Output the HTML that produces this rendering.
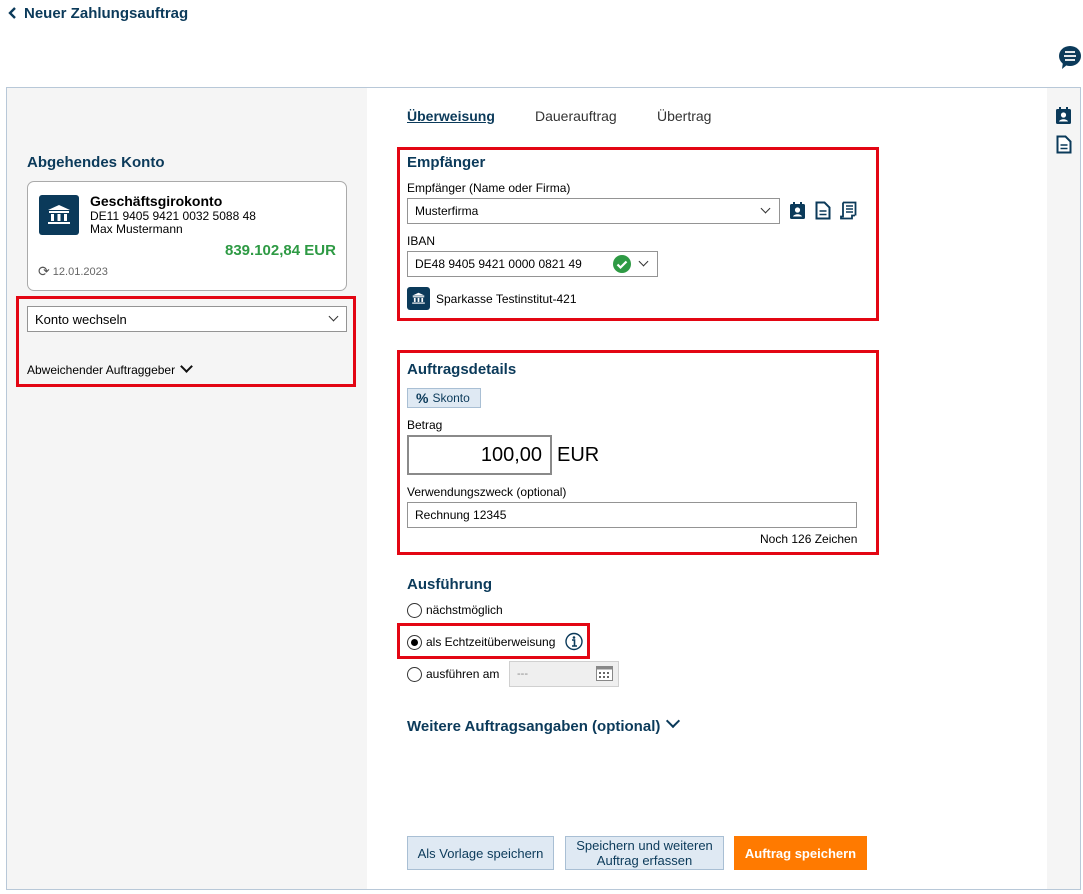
<!DOCTYPE html>
<html><head><meta charset="utf-8"><style>
*{box-sizing:border-box;margin:0;padding:0}
body{width:1083px;height:894px;background:#fff;font-family:"Liberation Sans",Arial,sans-serif;color:#000;position:relative;overflow:hidden;font-size:12px}
.a{position:absolute}
.navy{color:#0b3a5a}
h3{font-size:15px;font-weight:bold;color:#0b3a5a;position:absolute}
.red{position:absolute;border:3px solid #e30613}
.inp{position:absolute;border:1px solid #949494;background:#fff;font-size:12px;padding-left:7px;display:flex;align-items:center}
.chev{position:absolute;width:7px;height:7px;border-right:1.5px solid #333;border-bottom:1.5px solid #333;transform:rotate(45deg)}
.bank{position:absolute;background:#0b3a5a;border-radius:3px}
.radio{position:absolute;width:15px;height:15px;border:1px solid #333;border-radius:50%;background:#fff}
.btn{position:absolute;background:#dfe9f3;border:1px solid #a9bfd4;color:#0b3a5a;font-size:13px;text-align:center;display:flex;align-items:center;justify-content:center;line-height:15px}
</style></head><body>
<div class="a navy" style="left:8px;top:5px;font-size:15px;font-weight:bold">
<svg width="10" height="12" viewBox="0 0 10 12" style="vertical-align:-1px;margin-right:6px"><path d="M7 1L2 6l5 5" stroke="#0b3a5a" stroke-width="2.4" fill="none"/></svg>Neuer Zahlungsauftrag</div>
<svg class="a" style="left:1058px;top:45px" width="24" height="26" viewBox="0 0 24 26"><ellipse cx="12" cy="11" rx="11" ry="10" fill="#0b3a5a"/><path d="M5 17l-1 7 6-5z" fill="#0b3a5a"/><path d="M7 7h10M6 11h12M7 15h10" stroke="#fff" stroke-width="1.8"/></svg>

<div class="a" style="left:6px;top:87px;width:1075px;height:803px;border:1px solid #b8c8d8"></div>
<div class="a" style="left:7px;top:88px;width:360px;height:801px;background:#f5f5f5"></div>
<div class="a" style="left:1047px;top:88px;width:33px;height:801px;background:#f5f5f5"></div>
<svg class="a" style="left:1055px;top:107px" width="17" height="18" viewBox="0 0 17 18"><rect x="1" y="2" width="15" height="15" rx="1.5" fill="#0b3a5a"/><rect x="4" y="0" width="2" height="4" fill="#0b3a5a"/><rect x="11" y="0" width="2" height="4" fill="#0b3a5a"/><circle cx="8.5" cy="8" r="2.6" fill="#fff"/><path d="M4 14.5c1-3 8-3 9 0z" fill="#fff"/></svg>
<svg class="a" style="left:1056px;top:135px" width="16" height="19" viewBox="0 0 16 19"><path d="M1.5 1.5h8l5 5v11h-13z" fill="#fff" stroke="#0b3a5a" stroke-width="2"/><path d="M4.5 10h7M4.5 13.5h7" stroke="#0b3a5a" stroke-width="1.6"/></svg>

<h3 style="left:27px;top:154px;font-size:15px">Abgehendes Konto</h3>
<div class="a" style="left:27px;top:181px;width:320px;height:110px;background:#fff;border:1px solid #aaa;border-radius:7px"></div>
<div class="bank" style="left:39px;top:195px;width:40px;height:40px"><svg width="40" height="40" viewBox="0 0 40 40"><path d="M9 15l11-5 11 5z" fill="#fff"/><rect x="10" y="16" width="20" height="2" fill="#fff"/><rect x="12" y="19" width="3" height="7" fill="#fff"/><rect x="18.5" y="19" width="3" height="7" fill="#fff"/><rect x="25" y="19" width="3" height="7" fill="#fff"/><rect x="9" y="27" width="22" height="2" fill="#fff"/></svg></div>
<div class="a" style="left:90px;top:193px;font-size:14px;font-weight:bold">Geschäftsgirokonto</div>
<div class="a" style="left:90px;top:210px;font-size:12px;line-height:13px">DE11 9405 9421 0032 5088 48<br>Max Mustermann</div>
<div class="a" style="left:225px;top:242px;font-size:15px;font-weight:bold;color:#2e9a44">839.102,84 EUR</div>
<div class="a" style="left:38px;top:263px;font-size:11px;color:#666"><span style="font-size:14px;color:#555;vertical-align:-1px">⟳</span> 12.01.2023</div>
<div class="red" style="left:16px;top:296px;width:340px;height:91px"></div>
<div class="inp" style="left:27px;top:306px;width:320px;height:26px;font-size:13px">Konto wechseln</div>
<div class="chev" style="left:330px;top:313px"></div>
<div class="a" style="left:27px;top:363px;font-size:12px">Abweichender Auftraggeber</div>
<div class="chev" style="left:182px;top:362px;width:9px;height:9px;border-width:2px;border-color:#111"></div>

<div class="a navy" style="left:407px;top:108px;font-size:14px;font-weight:bold;text-decoration:underline">Überweisung</div>
<div class="a" style="left:535px;top:108px;font-size:14px;color:#333">Dauerauftrag</div>
<div class="a" style="left:657px;top:108px;font-size:14px;color:#333">Übertrag</div>

<div class="red" style="left:397px;top:147px;width:482px;height:174px"></div>
<h3 style="left:407px;top:154px">Empfänger</h3>
<div class="a" style="left:407px;top:181px;font-size:12px">Empfänger (Name oder Firma)</div>
<div class="inp" style="left:407px;top:198px;width:373px;height:26px">Musterfirma</div>
<div class="chev" style="left:762px;top:205px"></div>
<svg class="a" style="left:789px;top:201px" width="17" height="19" viewBox="0 0 17 19"><rect x="1" y="3" width="15" height="15" rx="1.5" fill="#0b3a5a"/><rect x="4" y="1" width="2" height="4" fill="#0b3a5a"/><rect x="11" y="1" width="2" height="4" fill="#0b3a5a"/><circle cx="8.5" cy="9" r="2.6" fill="#fff"/><path d="M4 15.5c1-3 8-3 9 0z" fill="#fff"/></svg>
<svg class="a" style="left:815px;top:201px" width="16" height="19" viewBox="0 0 16 19"><path d="M1.5 1.5h8l5 5v11h-13z" fill="#fff" stroke="#0b3a5a" stroke-width="2"/><path d="M4.5 10h7M4.5 13.5h7" stroke="#0b3a5a" stroke-width="1.6"/></svg>
<svg class="a" style="left:840px;top:201px" width="17" height="19" viewBox="0 0 17 19"><path d="M3 1.5h12.5v13M3 1.5v14h-2v2h11v-3h3" fill="none" stroke="#0b3a5a" stroke-width="1.8"/><path d="M6 5h7M6 8h7M6 11h7" stroke="#0b3a5a" stroke-width="1.4"/></svg>
<div class="a" style="left:407px;top:234px;font-size:12px">IBAN</div>
<div class="inp" style="left:407px;top:251px;width:251px;height:26px">DE48 9405 9421 0000 0821 49</div>
<svg class="a" style="left:613px;top:255px" width="18" height="18" viewBox="0 0 18 18"><circle cx="9" cy="9" r="9" fill="#2e9a44"/><path d="M4.5 9.5l3 3 6-6" stroke="#fff" stroke-width="2.2" fill="none"/></svg>
<div class="chev" style="left:640px;top:258px"></div>
<div class="bank" style="left:407px;top:287px;width:23px;height:23px"><svg width="23" height="23" viewBox="0 0 40 40"><path d="M9 15l11-5 11 5z" fill="#fff"/><rect x="10" y="16" width="20" height="2" fill="#fff"/><rect x="12" y="19" width="3" height="7" fill="#fff"/><rect x="18.5" y="19" width="3" height="7" fill="#fff"/><rect x="25" y="19" width="3" height="7" fill="#fff"/><rect x="9" y="27" width="22" height="2" fill="#fff"/></svg></div>
<div class="a" style="left:436px;top:292px;font-size:12px">Sparkasse Testinstitut-421</div>

<div class="red" style="left:397px;top:350px;width:482px;height:205px"></div>
<h3 style="left:407px;top:361px">Auftragsdetails</h3>
<div class="a navy" style="left:407px;top:388px;width:74px;height:20px;background:#dfe9f3;border:1px solid #a9bfd4;font-size:12px;display:flex;align-items:center;padding-left:8px"><b style="font-size:14px;margin-right:4px">%</b>Skonto</div>
<div class="a" style="left:407px;top:418px;font-size:12px">Betrag</div>
<div class="a" style="left:407px;top:435px;width:145px;height:40px;border:2px solid #8a8a8a;font-size:20px;text-align:right;padding-right:8px;line-height:36px">100,00</div>
<div class="a" style="left:557px;top:444px;font-size:20px">EUR</div>
<div class="a" style="left:407px;top:485px;font-size:12px">Verwendungszweck (optional)</div>
<div class="inp" style="left:407px;top:502px;width:450px;height:26px">Rechnung 12345</div>
<div class="a" style="left:760px;top:532px;font-size:12px">Noch 126 Zeichen</div>

<h3 style="left:407px;top:576px">Ausführung</h3>
<div class="radio" style="left:407px;top:603px"></div>
<div class="a" style="left:426px;top:603px">nächstmöglich</div>
<div class="red" style="left:397px;top:623px;width:193px;height:36px"></div>
<div class="radio" style="left:407px;top:635px"><div style="position:absolute;left:3px;top:3px;width:7px;height:7px;border-radius:50%;background:#000"></div></div>
<div class="a" style="left:426px;top:635px">als Echtzeitüberweisung</div>
<svg class="a" style="left:565px;top:632px" width="18" height="19" viewBox="0 0 18 19"><circle cx="9" cy="9.5" r="8" fill="none" stroke="#0b3a5a" stroke-width="1.4"/><circle cx="9" cy="5.5" r="1.3" fill="#0b3a5a"/><path d="M7 8h2.5v6M7 14h5" stroke="#0b3a5a" stroke-width="1.6" fill="none"/></svg>
<div class="radio" style="left:407px;top:667px"></div>
<div class="a" style="left:426px;top:667px">ausführen am</div>
<div class="a" style="left:509px;top:661px;width:110px;height:26px;background:#efefef;border:1px solid #d0d0d0;color:#888;padding-left:7px;line-height:24px;font-size:11px">---</div>
<svg class="a" style="left:596px;top:666px" width="17" height="15" viewBox="0 0 17 15"><rect x="0.5" y="0.5" width="16" height="14" fill="#fff" stroke="#888"/><rect x="0.5" y="0.5" width="16" height="3" fill="#888"/><g fill="#666"><rect x="3" y="6" width="2" height="2"/><rect x="7" y="6" width="2" height="2"/><rect x="11" y="6" width="2" height="2"/><rect x="3" y="10" width="2" height="2"/><rect x="7" y="10" width="2" height="2"/><rect x="11" y="10" width="2" height="2"/></g></svg>

<h3 style="left:407px;top:718px">Weitere Auftragsangaben (optional)</h3>
<div class="chev" style="left:668px;top:716px;width:10px;height:10px;border-width:2px;border-color:#0b3a5a"></div>

<div class="btn" style="left:407px;top:836px;width:147px;height:34px">Als Vorlage speichern</div>
<div class="btn" style="left:565px;top:836px;width:159px;height:34px">Speichern und weiteren<br>Auftrag erfassen</div>
<div class="btn" style="left:734px;top:836px;width:133px;height:34px;background:#ff7a00;border-color:#ff7a00;color:#fff;font-weight:bold">Auftrag speichern</div>
</body></html>
